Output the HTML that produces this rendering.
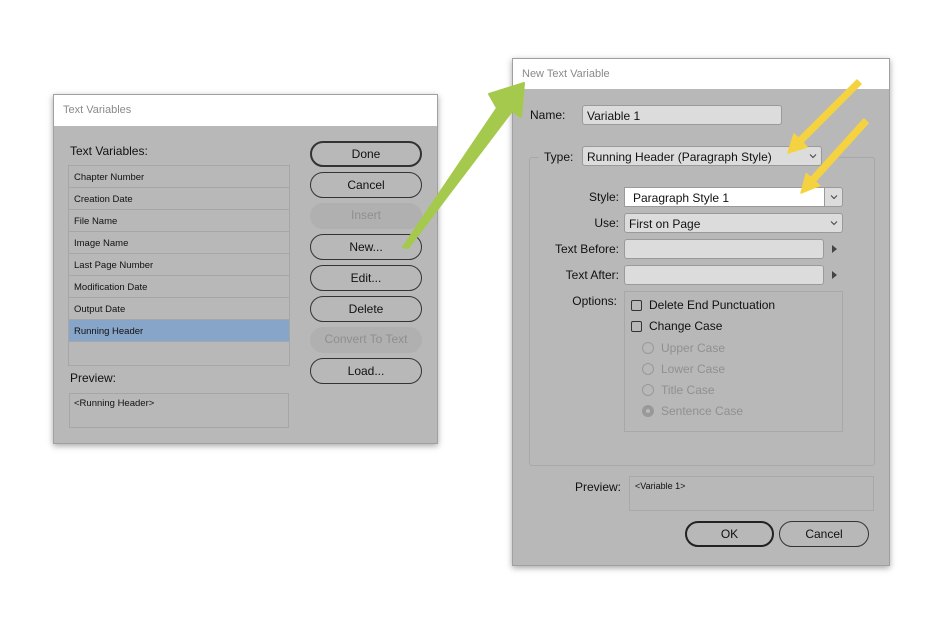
<!DOCTYPE html>
<html><head><meta charset="utf-8"><style>
*{box-sizing:border-box;margin:0;padding:0}
body{width:941px;height:620px;background:#fff;position:relative;overflow:hidden;font-family:"Liberation Sans",sans-serif;color:#111}
.a{position:absolute}
.dlg{background:#b8b8b8;border:1px solid #a0a0a0;box-shadow:0 2px 6px rgba(0,0,0,.35)}
.tb{position:absolute;left:0;top:0;right:0;background:#fff;color:#8a8a8a;font-size:11px;padding-left:9px}
.row{position:absolute;left:0;width:220px;height:22px;border-bottom:1px solid #a6a6a6;font-size:9.5px;padding:6px 0 0 5px}
.btn{position:absolute;left:256px;width:112px;height:26px;border:1.3px solid #333;border-radius:13px;text-align:center;font-size:12px;line-height:25px}
.dis{border:none;background:#b0b0b0;color:#8f8f8f}
.lbl{position:absolute;font-size:12px;text-align:right}
.inp{position:absolute;background:#dcdcdc;border:1px solid #9a9a9a;border-radius:3px;font-size:12px;padding:3px 4px;height:20px}
.chev{position:absolute}
.tri{position:absolute;width:0;height:0;border-left:5px solid #444;border-top:4px solid transparent;border-bottom:4px solid transparent}
.cb{position:absolute;width:11px;height:11px;border:1px solid #333;border-radius:2px}
.rd{position:absolute;width:12px;height:12px;border:1px solid #999;border-radius:50%}
.gr{position:absolute;font-size:12px;color:#909090}
</style></head><body>
<div class="a dlg" style="left:53px;top:94px;width:385px;height:350px">
 <div class="tb" style="height:31px;line-height:31px">Text Variables</div>
 <div class="a" style="left:16px;top:49px;font-size:12px">Text Variables:</div>
 <div class="a" style="left:14px;top:70px;width:222px;height:201px;border:1px solid #a6a6a6">
  <div class="row" style="top:0">Chapter Number</div>
  <div class="row" style="top:22px">Creation Date</div>
  <div class="row" style="top:44px">File Name</div>
  <div class="row" style="top:66px">Image Name</div>
  <div class="row" style="top:88px">Last Page Number</div>
  <div class="row" style="top:110px">Modification Date</div>
  <div class="row" style="top:132px">Output Date</div>
  <div class="row" style="top:154px;background:#87a5c8">Running Header</div>
 </div>
 <div class="a" style="left:16px;top:276px;font-size:12px">Preview:</div>
 <div class="a" style="left:15px;top:298px;width:220px;height:35px;border:1px solid #a6a6a6;font-size:9.5px;padding:4px 4px">&lt;Running Header&gt;</div>
 <div class="btn" style="top:46px;border-width:2px;line-height:23px">Done</div>
 <div class="btn" style="top:77px">Cancel</div>
 <div class="btn dis" style="top:108px">Insert</div>
 <div class="btn" style="top:139px">New...</div>
 <div class="btn" style="top:170px">Edit...</div>
 <div class="btn" style="top:201px">Delete</div>
 <div class="btn dis" style="top:232px">Convert To Text</div>
 <div class="btn" style="top:263px">Load...</div>
</div>
<div class="a dlg" style="left:512px;top:58px;width:378px;height:508px">
 <div class="tb" style="height:30px;line-height:30px">New Text Variable</div>
 <div class="lbl" style="left:17px;top:49px">Name:</div>
 <div class="inp" style="left:69px;top:46px;width:200px">Variable 1</div>
 <div class="a" style="left:16px;top:98px;width:346px;height:309px;border:1px solid #a8a8a8;border-radius:3px"></div>
 <div class="a" style="left:26px;top:88px;width:300px;height:20px;background:#b8b8b8"></div>
 <div class="lbl" style="left:31px;top:91px">Type:</div>
 <div class="inp" style="left:69px;top:87px;width:240px">Running Header (Paragraph Style)</div>
 <svg class="chev" style="left:296px;top:94px" width="8" height="6"><path d="M1 1.5L4 4.5L7 1.5" stroke="#444" fill="none"/></svg>
 <div class="lbl" style="left:30px;top:131px;width:76px">Style:</div>
 <div class="a" style="left:111px;top:128px;width:201px;height:20px;background:#fff;border:1px solid #9a9a9a;font-size:12px;padding:3px 8px">Paragraph Style 1</div>
 <div class="inp" style="left:311px;top:128px;width:19px;border-radius:0 3px 3px 0"></div>
 <svg class="chev" style="left:317px;top:135px" width="8" height="6"><path d="M1 1.5L4 4.5L7 1.5" stroke="#444" fill="none"/></svg>
 <div class="lbl" style="left:30px;top:157px;width:76px">Use:</div>
 <div class="inp" style="left:111px;top:154px;width:219px">First on Page</div>
 <svg class="chev" style="left:317px;top:161px" width="8" height="6"><path d="M1 1.5L4 4.5L7 1.5" stroke="#444" fill="none"/></svg>
 <div class="lbl" style="left:20px;top:183px;width:86px">Text Before:</div>
 <div class="inp" style="left:111px;top:180px;width:200px"></div>
 <div class="tri" style="left:319px;top:186px"></div>
 <div class="lbl" style="left:20px;top:209px;width:86px">Text After:</div>
 <div class="inp" style="left:111px;top:206px;width:200px"></div>
 <div class="tri" style="left:319px;top:212px"></div>
 <div class="lbl" style="left:20px;top:235px;width:84px">Options:</div>
 <div class="a" style="left:111px;top:232px;width:219px;height:141px;border:1px solid #a8a8a8"></div>
 <div class="cb" style="left:118px;top:241px"></div><div class="a" style="left:136px;top:239px;font-size:12px">Delete End Punctuation</div>
 <div class="cb" style="left:118px;top:262px"></div><div class="a" style="left:136px;top:260px;font-size:12px">Change Case</div>
 <div class="rd" style="left:129px;top:283px"></div><div class="gr" style="left:148px;top:282px">Upper Case</div>
 <div class="rd" style="left:129px;top:304px"></div><div class="gr" style="left:148px;top:303px">Lower Case</div>
 <div class="rd" style="left:129px;top:325px"></div><div class="gr" style="left:148px;top:324px">Title Case</div>
 <div class="rd" style="left:129px;top:346px;border:4px solid #999;background:#bbb"></div><div class="gr" style="left:148px;top:345px">Sentence Case</div>
 <div class="lbl" style="left:62px;top:421px">Preview:</div>
 <div class="a" style="left:116px;top:417px;width:245px;height:35px;border:1px solid #a8a8a8;font-size:9px;padding:4px 5px">&lt;Variable 1&gt;</div>
 <div class="a" style="left:172px;top:462px;width:89px;height:26px;border:2px solid #222;border-radius:13px;text-align:center;font-size:12px;line-height:23px">OK</div>
 <div class="a" style="left:266px;top:462px;width:90px;height:26px;border:1.3px solid #333;border-radius:13px;text-align:center;font-size:12px;line-height:24px">Cancel</div>
</div>
<svg class="a" style="left:0;top:0" width="941" height="620">
 <polygon points="403,247 497,108 489,94 524,83 521,117 512,111 408,248" fill="#a4c94c" stroke="#a4c94c" stroke-width="2" stroke-linejoin="round"/>
 <polygon points="861,84 802.8,142.4 807,147 788,153 794,134 798.6,138.2 857,80" fill="#f5d340" stroke="#f5d340" stroke-width="1.5" stroke-linejoin="round"/>
 <polygon points="868.2,123 815.2,181.6 819.7,185.6 801,193 806.3,173.6 810.8,177.6 863.8,119" fill="#f5d340" stroke="#f5d340" stroke-width="1.5" stroke-linejoin="round"/>
</svg>
</body></html>
